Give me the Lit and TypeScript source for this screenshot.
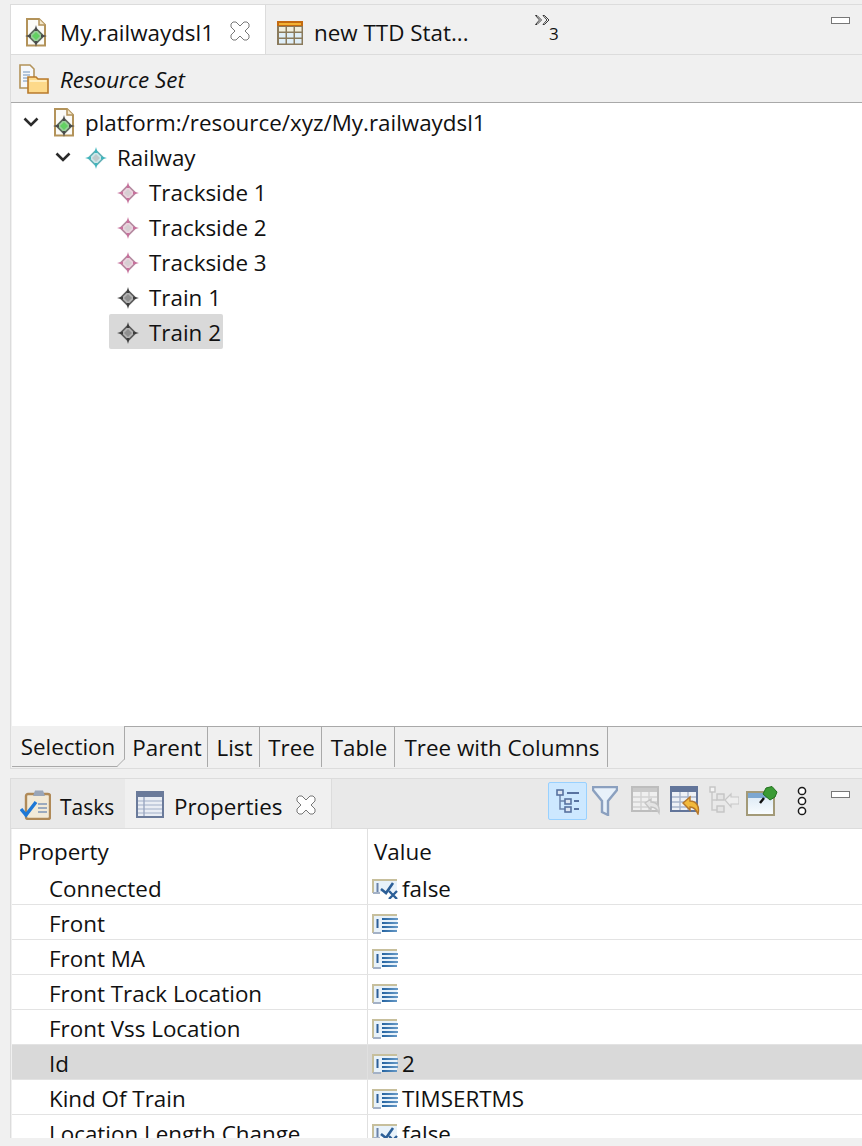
import { LitElement, html, css, svg } from 'lit';
import { customElement } from 'lit/decorators.js';

type StarColors = { e: string; m: string; f: string; c: string };

// node icon: a diamond with four dark tips
const star = (colors: StarColors, x = 0, y = 0) => svg`
  <g transform="translate(${x} ${y})">
    <path d="M11 3.5 L18.5 11 L11 18.5 L3.5 11 Z" fill="${colors.f}" stroke="${colors.m}" stroke-width="1.7"/>
    <path d="M11 7 L15 11 L11 15 L7 11 Z" fill="${colors.c}"/>
    <path d="M11 0 L12.6 6 H9.4 Z M11 22 L12.6 16 H9.4 Z M0 11 L6 9.4 V12.6 Z M22 11 L16 9.4 V12.6 Z" fill="${colors.e}"/>
  </g>`;

const starIcon = (colors: StarColors) => html`
  <svg class="star" width="22" height="22" viewBox="0 0 22 22">${star(colors)}</svg>`;

const docIcon = html`
  <svg class="doc" width="22" height="29" viewBox="0 0 22 29">
    <path d="M2 1 H14 L20 7 V27.5 H2 Z" fill="#fbfbf8" stroke="#b3935a" stroke-width="2"/>
    <path d="M14 1 V7 H20" fill="#f3e7c9" stroke="#b3935a" stroke-width="1.5"/>
    ${star({ e: '#4a4a4a', m: '#5c6a5c', f: '#9ad09a', c: '#62d062' }, 0, 7)}
  </svg>`;

const closeIcon = html`
  <svg width="20" height="20" viewBox="0 0 20 20">
    <path d="M1 3 L3 1 L6 1 L10 5 L14 1 L17 1 L19 3 L19 6 L15 10 L19 14 L19 17 L17 19 L14 19 L10 15 L6 19 L3 19 L1 17 L1 14 L5 10 L1 6 Z" fill="#fff" stroke="#777" stroke-width="1"/>
  </svg>`;

const chevron = html`
  <svg width="16" height="10" viewBox="0 0 16 10">
    <path d="M1.5 1.5 L8 8 L14.5 1.5" fill="none" stroke="#2b2b2b" stroke-width="2.6"/>
  </svg>`;

const gridIcon = html`
  <svg width="26" height="24" viewBox="0 0 26 24">
    <rect x="0" y="0" width="26" height="24" fill="#8a7a5c"/>
    <rect x="0" y="0" width="26" height="5" fill="#c46a10"/>
    <rect x="2" y="2" width="22" height="2" fill="#f2b233"/>
    ${[6, 12, 18].map(y => [2, 10, 18].map(x => svg`<rect x="${x}" y="${y}" width="6.5" height="4.5" fill="${y === 6 ? '#f0eedd' : '#dfeef8'}"/>`))}
  </svg>`;

const resourceSetIcon = html`
  <svg width="30" height="30" viewBox="0 0 30 30">
    <path d="M1 1 H11 L15 5 V24 H1 Z" fill="#f6f8fb" stroke="#b3935a" stroke-width="1.6"/>
    <path d="M4 8 H11 M4 11 H11 M4 14 H9 M4 17 H9" stroke="#9db4d0" stroke-width="1.3"/>
    <path d="M9 13 H17 L19 15 H29 V29 H9 Z" fill="#fdd98a" stroke="#b87a2c" stroke-width="1.6"/>
    <path d="M10.5 17 H27.5" stroke="#fff3cc" stroke-width="1.6"/>
  </svg>`;

const tasksIcon = html`
  <svg class="lift" width="31" height="30" viewBox="0 0 31 30">
    <rect x="6" y="4" width="24" height="25" rx="2" fill="#f2ead8" stroke="#b08a58" stroke-width="2.4"/>
    <path d="M13 6 L15 0.5 H23 L25 6 Z" fill="#9aa6b8"/>
    <path d="M18 14 H27 M18 18 H27 M18 22 H27" stroke="#7f95b5" stroke-width="1.6"/>
    <path d="M1 19 L6 25 L16 12" fill="none" stroke="#1e78d6" stroke-width="3.4"/>
  </svg>`;

const propsIcon = html`
  <svg class="lift" width="28" height="27" viewBox="0 0 28 27">
    <rect x="1" y="1" width="26" height="25" fill="#e9edf4" stroke="#6a7a9a" stroke-width="2"/>
    <rect x="2" y="2" width="24" height="4" fill="#6a7a9a"/>
    <path d="M2 10 H26 M2 14 H26 M2 18 H26 M2 22 H26" stroke="#b9c3d6" stroke-width="1.4"/>
    <path d="M8 6 V25" stroke="#9aa7c0" stroke-width="1.4"/>
  </svg>`;

const treeModeIcon = html`
  <svg width="24" height="24" viewBox="0 0 24 24">
    <path d="M4 4 V20 H10 M4 12 H10" fill="none" stroke="#6b82ab" stroke-width="1.5"/>
    <rect x="1" y="1" width="6" height="5" fill="#dde6f2" stroke="#5872a0" stroke-width="1.6"/>
    <rect x="9" y="10" width="6" height="5" fill="#dde6f2" stroke="#5872a0" stroke-width="1.6"/>
    <rect x="9" y="18" width="6" height="5" fill="#dde6f2" stroke="#5872a0" stroke-width="1.6"/>
    <path d="M11 4 H23 M18 12 H23 M18 20 H23" stroke="#5872a0" stroke-width="2"/>
  </svg>`;

const filterIcon = html`
  <svg width="26" height="30" viewBox="0 0 26 30">
    <path d="M1 1 H25 V4 L16 15 V29 L10 26 V15 L1 4 Z" fill="#e8f1fa" stroke="#8ba0bf" stroke-width="2.4"/>
  </svg>`;

const greyTableIcon = html`
  <svg width="30" height="29" viewBox="0 0 30 29">
    <rect x="1" y="1" width="26" height="24" fill="#efefef" stroke="#bdbdbd" stroke-width="2"/>
    <rect x="2" y="2" width="24" height="4" fill="#c9c9c9"/>
    <path d="M2 11 H26 M2 16 H26 M2 21 H26 M10 6 V24 M18 6 V24" stroke="#d2d2d2" stroke-width="1.4"/>
    <path d="M14 17 L20 13 V16 C26 16 29 20 28 27 C26 23 24 21 20 21 V24 Z" fill="#e4e4e4" stroke="#c4c4c4" stroke-width="1.4"/>
  </svg>`;

const undoTableIcon = html`
  <svg width="30" height="29" viewBox="0 0 30 29">
    <rect x="1" y="1" width="26" height="24" fill="#eef1f6" stroke="#62759a" stroke-width="2"/>
    <rect x="2" y="2" width="24" height="4" fill="#62759a"/>
    <path d="M2 11 H26 M2 16 H26 M2 21 H26 M10 6 V24 M18 6 V24" stroke="#a9b5cb" stroke-width="1.4"/>
    <path d="M13 17 L20 11 V15 C26 15 30 20 28 28 C26 23 24 21 20 21 V24 Z" fill="#f2b93c" stroke="#b5762a" stroke-width="1.4"/>
  </svg>`;

const greyTreeIcon = html`
  <svg width="30" height="28" viewBox="0 0 30 28">
    <path d="M3 4 V24 H8 M3 14 H8" fill="none" stroke="#c9c9c9" stroke-width="1.5"/>
    <rect x="1" y="1" width="5" height="5" fill="#f4f4f4" stroke="#c4c4c4" stroke-width="1.4"/>
    <rect x="8" y="8" width="7" height="6" fill="#e4e4e4" stroke="#c4c4c4" stroke-width="1.4"/>
    <rect x="8" y="20" width="7" height="6" fill="#e4e4e4" stroke="#c4c4c4" stroke-width="1.4"/>
    <path d="M16 14 L22 8 V11 H30 V18 H22 V21 Z" fill="#eeeeee" stroke="#c8c8c8" stroke-width="1.2"/>
  </svg>`;

const pinIcon = html`
  <svg width="32" height="30" viewBox="0 0 32 30">
    <defs>
      <linearGradient id="pinbg" x1="0" y1="0" x2="0" y2="1">
        <stop offset="0" stop-color="#d6e6f3"/>
        <stop offset="1" stop-color="#fafdff"/>
      </linearGradient>
    </defs>
    <rect x="1" y="6" width="27" height="23" fill="url(#pinbg)" stroke="#a39a78" stroke-width="2"/>
    <rect x="2" y="7" width="25" height="5" fill="#7da7d0"/>
    <path d="M18 12 L14 17" stroke="#111" stroke-width="2.4"/>
    <path d="M20 2 L26 0.5 L31 6 L29 11 L24 14 L17 8 Z" fill="#3b9b35" stroke="#20701c" stroke-width="1"/>
  </svg>`;

const dotsIcon = html`
  <svg width="12" height="30" viewBox="0 0 12 30">
    <circle cx="6" cy="5" r="3.6" fill="#fff" stroke="#1a1a1a" stroke-width="1.5"/>
    <circle cx="6" cy="15" r="3.6" fill="#fff" stroke="#1a1a1a" stroke-width="1.5"/>
    <circle cx="6" cy="25" r="3.6" fill="#fff" stroke="#1a1a1a" stroke-width="1.5"/>
  </svg>`;

const overflowIcon = html`
  <svg width="16" height="10" viewBox="0 0 16 10">
    <path d="M0.5 0.5 L4.5 5 L0.5 9.5 H2 L6.5 5 L2 0.5 Z M8 0.5 L12 5 L8 9.5 H9.5 L14 5 L9.5 0.5 Z" fill="#fff" stroke="#222" stroke-width="0.9"/>
  </svg>`;

const listIcon = html`
  <svg class="val-icon" width="26" height="20" viewBox="0 0 26 20">
    <defs>
      <linearGradient id="fade" gradientUnits="userSpaceOnUse" x1="9" y1="0" x2="26" y2="0">
        <stop offset="0" stop-color="#1f5f9e"/>
        <stop offset="1" stop-color="#6a9cc8"/>
      </linearGradient>
    </defs>
    <path d="M1 19 V1 H25" fill="none" stroke="#c7bf9c" stroke-width="2"/>
    <path d="M1 19 H9" stroke="#a3b1c6" stroke-width="2"/>
    <rect x="2" y="2" width="23" height="16" fill="#e8f2fa"/>
    <rect x="4.5" y="5" width="2" height="9" fill="#2c5f97"/>
    <path d="M10 5 H26 M10 9 H26 M10 13 H26 M10 17 H25" stroke="url(#fade)" stroke-width="2"/>
  </svg>`;

const boolIcon = html`
  <svg class="val-icon" width="26" height="20" viewBox="0 0 26 20">
    <path d="M1 14 V1 H25" fill="none" stroke="#c7bf9c" stroke-width="2"/>
    <rect x="2" y="2" width="23" height="11" fill="#e8f2fa"/>
    <rect x="4.5" y="4" width="2" height="9" fill="#6a82a8"/>
    <path d="M1 14 H8" stroke="#a3b1c6" stroke-width="2"/>
    <path d="M9 10 L14 14 L21 4" fill="none" stroke="#2c5f97" stroke-width="2.6"/>
    <path d="M17 12 L25 20 M25 12 L17 20" stroke="#2c5f97" stroke-width="2.4"/>
  </svg>`;

const tabCorner = html`
  <svg class="corner" width="8" height="8" viewBox="0 0 8 8">
    <path d="M8 0 L0 8 H8 Z" fill="#f0f0f0"/>
    <path d="M7.5 0 L0 7.5" stroke="#a9a9a9" stroke-width="1"/>
  </svg>`;

interface TreeNode { label: string; depth: number; open?: boolean; selected?: boolean; icon: unknown; }

const tracksideStar = starIcon({ e: '#c8709c', m: '#b48aa0', f: '#ecd3df', c: '#d6ced2' });
const trainStar = starIcon({ e: '#3c3c3c', m: '#5c5c5c', f: '#b4b4b4', c: '#909090' });

const nodes: TreeNode[] = [
  { label: 'platform:/resource/xyz/My.railwaydsl1', depth: 0, open: true, icon: docIcon },
  { label: 'Railway', depth: 1, open: true, icon: starIcon({ e: '#3fb6bd', m: '#64b0b6', f: '#cde8ea', c: '#bfcacc' }) },
  { label: 'Trackside 1', depth: 2, icon: tracksideStar },
  { label: 'Trackside 2', depth: 2, icon: tracksideStar },
  { label: 'Trackside 3', depth: 2, icon: tracksideStar },
  { label: 'Train 1', depth: 2, icon: trainStar },
  { label: 'Train 2', depth: 2, selected: true, icon: trainStar },
];

const viewerTabs = [
  { label: 'Selection', width: 113 },
  { label: 'Parent', width: 83 },
  { label: 'List', width: 52 },
  { label: 'Tree', width: 62 },
  { label: 'Table', width: 73 },
  { label: 'Tree with Columns', width: 213 },
];

const rows: { name: string; value: string; icon: unknown; selected?: boolean }[] = [
  { name: 'Connected', value: 'false', icon: boolIcon },
  { name: 'Front', value: '', icon: listIcon },
  { name: 'Front MA', value: '', icon: listIcon },
  { name: 'Front Track Location', value: '', icon: listIcon },
  { name: 'Front Vss Location', value: '', icon: listIcon },
  { name: 'Id', value: '2', icon: listIcon, selected: true },
  { name: 'Kind Of Train', value: 'TIMSERTMS', icon: listIcon },
  { name: 'Location Length Change', value: 'false', icon: boolIcon },
];

@customElement('app-root')
export class AppRoot extends LitElement {
  static styles = css`
    :host {
      display: block;
      width: 862px;
      height: 1146px;
      overflow: hidden;
      background: #f0f0f0;
      color: #111;
      font-family: 'Open Sans', 'Noto Sans', sans-serif;
      font-size: 22.4px;
    }

    .page {
      display: flex;
      flex-direction: column;
      height: 1146px;
      padding: 4px 0 0 10px;
      box-sizing: border-box;
    }

    .editor {
      height: 765px;
      flex: none;
      box-sizing: border-box;
      display: flex;
      flex-direction: column;
      border-top: 1px solid #dcdcdc;
      border-left: 1px solid #dcdcdc;
      border-bottom: 1px solid #dcdcdc;
    }

    .tabbar {
      height: 49px;
      flex: none;
      display: flex;
      align-items: stretch;
      border-bottom: 1px solid #dcdcdc;
      position: relative;
    }

    .tab {
      display: flex;
      align-items: center;
      box-sizing: border-box;
      padding-top: 6px;
      white-space: nowrap;
    }

    .tab-editor {
      width: 255px;
      background: #fff;
      padding-left: 14px;
      border-right: 1px solid #dcdcdc;
    }

    .tab-editor .name { margin-left: 13px; }
    .close { display: flex; margin-top: -3px; }
    .tab-editor .close { margin-left: 16px; }

    .tab-other { padding-left: 11px; }
    .tab-other .name { margin-left: 11px; }

    .chevrons {
      position: absolute;
      left: 524px;
      top: 10px;
      display: flex;
    }

    .count {
      position: absolute;
      left: 538px;
      top: 17px;
      font-size: 17px;
    }

    .minimize {
      position: absolute;
      box-sizing: border-box;
      left: 820px;
      top: 12px;
      width: 19px;
      height: 7px;
      background: #fff;
      border: 1px solid #777;
    }

    .breadcrumb {
      height: 48px;
      flex: none;
      display: flex;
      align-items: center;
      padding: 1px 0 0 8px;
      box-sizing: border-box;
      border-bottom: 1px solid #a9a9a9;
      font-style: italic;
    }

    .breadcrumb svg { margin-right: 11px; }

    .tree {
      flex: 1;
      background: #fff;
      padding-top: 1px;
      margin-left: 1px;
    }

    .row {
      height: 35px;
      display: flex;
      align-items: stretch;
    }

    .twisty {
      width: 32px;
      flex: none;
      display: flex;
      align-items: center;
      justify-content: flex-end;
      padding-right: 6px;
      box-sizing: border-box;
    }

    .item {
      display: flex;
      align-items: center;
      padding: 2px 2px 0 8px;
      box-sizing: border-box;
      border-radius: 2px;
      white-space: nowrap;
    }

    .item.selected { background: #d9d9d9; }
    .item svg { margin-right: 10px; flex: none; }

    .viewers {
      height: 41px;
      flex: none;
      display: flex;
      margin: 0 0 1px 1px;
      border-top: 1px solid #a9a9a9;
      box-sizing: border-box;
    }

    .viewer {
      display: flex;
      align-items: center;
      justify-content: center;
      box-sizing: border-box;
      padding: 1px 0 0 2px;
      border-right: 1px solid #a9a9a9;
      white-space: nowrap;
    }

    .viewer.active {
      position: relative;
      margin-top: -1px;
      padding-left: 0;
      background: #f0f0f0;
      border-bottom: 1px solid #a9a9a9;
    }

    .corner {
      position: absolute;
      right: -1px;
      bottom: -1px;
    }

    .lower {
      margin-top: 9px;
      flex: 1;
      min-height: 0;
      display: flex;
      flex-direction: column;
      border-top: 1px solid #dcdcdc;
      border-left: 1px solid #dcdcdc;
      margin-bottom: 8px;
    }

    .viewbar {
      height: 50px;
      flex: none;
      display: flex;
      background: #e9e9e9;
      border-bottom: 1px solid #dcdcdc;
      box-sizing: border-box;
      position: relative;
    }

    .lift { margin-top: -4px; }

    .tab-tasks { width: 114px; padding-left: 9px; }
    .tab-tasks .name { margin-left: 9px; font-size: 21px; }

    .tab-props {
      width: 207px;
      background: #f0f0f0;
      padding-left: 11px;
      border-right: 1px solid #dcdcdc;
    }

    .tab-props .name { margin-left: 10px; }
    .tab-props .close { margin-left: 14px; }

    .tools {
      position: absolute;
      left: 0;
      top: 0;
    }

    .tool {
      position: absolute;
      display: flex;
    }

    .tool.on {
      width: 39px;
      height: 38px;
      box-sizing: border-box;
      background: #cde8ff;
      border: 1px solid #99d1ff;
      border-radius: 2px;
      align-items: center;
      justify-content: center;
    }

    .table {
      flex: 1;
      min-height: 0;
      overflow: hidden;
      background: #fff;
      margin-left: 1px;
    }

    .t-row {
      display: grid;
      grid-template-columns: 355px 1fr;
      height: 35px;
      box-sizing: border-box;
      border-bottom: 1px solid #e3e3e3;
    }

    .t-row.head {
      height: 41px;
      border-bottom: none;
    }

    .t-row.selected { background: #d9d9d9; }

    .cell {
      display: flex;
      align-items: center;
      padding-top: 3px;
      box-sizing: border-box;
      white-space: nowrap;
    }

    .cell.name { padding-left: 37px; }
    .head .cell.name { padding-left: 6px; }

    .cell.value {
      border-left: 1px solid #e0e0e0;
      padding-left: 4px;
    }

    .head .cell.value { padding-left: 6px; }
    .val-icon { margin-right: 4px; flex: none; }
  `;

  render() {
    return html`
      <div class="page">
        <div class="editor">
          <div class="tabbar">
            <div class="tab tab-editor">
              ${docIcon}<span class="name">My.railwaydsl1</span><span class="close">${closeIcon}</span>
            </div>
            <div class="tab tab-other">${gridIcon}<span class="name">new TTD Stat...</span></div>
            <span class="chevrons">${overflowIcon}</span>
            <span class="count">3</span>
            <span class="minimize"></span>
          </div>
          <div class="breadcrumb">${resourceSetIcon}Resource Set</div>
          <div class="tree">
            ${nodes.map(n => html`
              <div class="row" style="padding-left:${1 + n.depth * 32}px">
                <span class="twisty">${n.open ? chevron : ''}</span>
                <span class="item ${n.selected ? 'selected' : ''}">${n.icon}${n.label}</span>
              </div>`)}
          </div>
          <div class="viewers">
            ${viewerTabs.map((t, i) => html`
              <div class="viewer ${i === 0 ? 'active' : ''}" style="width:${t.width}px">${t.label}${i === 0 ? tabCorner : ''}</div>`)}
          </div>
        </div>
        <div class="lower">
          <div class="viewbar">
            <div class="tab tab-tasks">${tasksIcon}<span class="name">Tasks</span></div>
            <div class="tab tab-props">${propsIcon}<span class="name">Properties</span><span class="close">${closeIcon}</span></div>
            <div class="tools">
              <span class="tool on" style="left:537px;top:3px">${treeModeIcon}</span>
              <span class="tool" style="left:581px;top:7px">${filterIcon}</span>
              <span class="tool" style="left:620px;top:7px">${greyTableIcon}</span>
              <span class="tool" style="left:659px;top:7px">${undoTableIcon}</span>
              <span class="tool" style="left:698px;top:7px">${greyTreeIcon}</span>
              <span class="tool" style="left:735px;top:7px">${pinIcon}</span>
              <span class="tool" style="left:785px;top:7px">${dotsIcon}</span>
              <span class="minimize"></span>
            </div>
          </div>
          <div class="table">
            <div class="t-row head">
              <div class="cell name">Property</div>
              <div class="cell value">Value</div>
            </div>
            ${rows.map(r => html`
              <div class="t-row ${r.selected ? 'selected' : ''}">
                <div class="cell name">${r.name}</div>
                <div class="cell value">${r.icon}${r.value}</div>
              </div>`)}
          </div>
        </div>
      </div>
    `;
  }
}
